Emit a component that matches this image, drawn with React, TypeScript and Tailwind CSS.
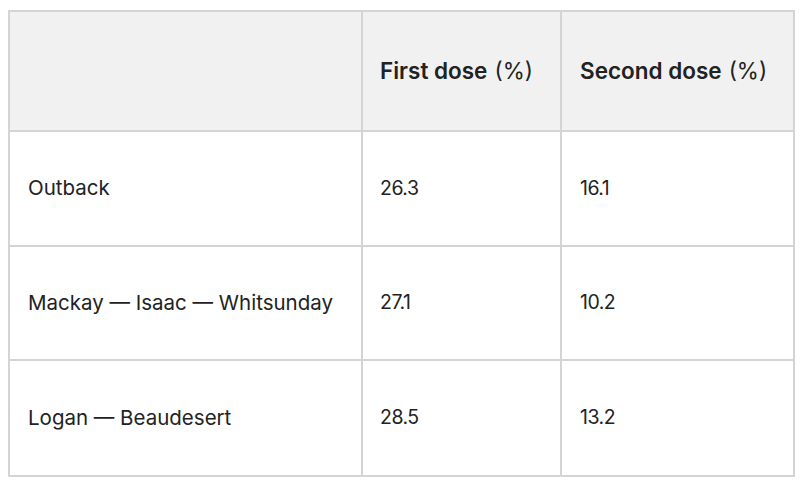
import React from "react";

const rows = [
  ["Outback", "26.3", "16.1"],
  ["Mackay — Isaac — Whitsunday", "27.1", "10.2"],
  ["Logan — Beaudesert", "28.5", "13.2"],
];
const heights = ["h-[115px]", "h-[114px]", "h-[114px]"];

export default function App() {
  return (
    <div className="w-[800px] h-[481px] bg-white pt-[10px] pl-[8px]" style={{ fontFamily: "Inter, 'Noto Sans', sans-serif" }}>
      <div className="w-[787px] border-2 border-[#d4d4d4] text-[20.5px] text-[#222]">
        <div className="grid grid-cols-[353px_199px_1fr] h-[120px] bg-[#f1f1f1] border-b-2 border-[#d4d4d4] text-[22.5px]">
          <div className="border-r-2 border-[#d4d4d4]" />
          <div className="border-r-2 border-[#d4d4d4] flex items-center pl-[17px] font-semibold">
            First dose <span className="font-normal ml-[7px]">(%)</span>
          </div>
          <div className="flex items-center pl-[18px] font-semibold">
            Second dose <span className="font-normal ml-[7px]">(%)</span>
          </div>
        </div>
        {rows.map((r, i) => (
          <div key={i} className={`grid grid-cols-[353px_199px_1fr] ${heights[i]} ${i < rows.length - 1 ? "border-b-2 border-[#d4d4d4]" : ""}`}>
            <div className="border-r-2 border-[#d4d4d4] flex items-center pl-[18px]">{r[0]}</div>
            <div className="border-r-2 border-[#d4d4d4] flex items-center pl-[17px] text-[19.5px] tracking-[-0.5px]">{r[1]}</div>
            <div className="flex items-center pl-[18px] text-[19.5px] tracking-[-0.5px]">{r[2]}</div>
          </div>
        ))}
      </div>
    </div>
  );
}
